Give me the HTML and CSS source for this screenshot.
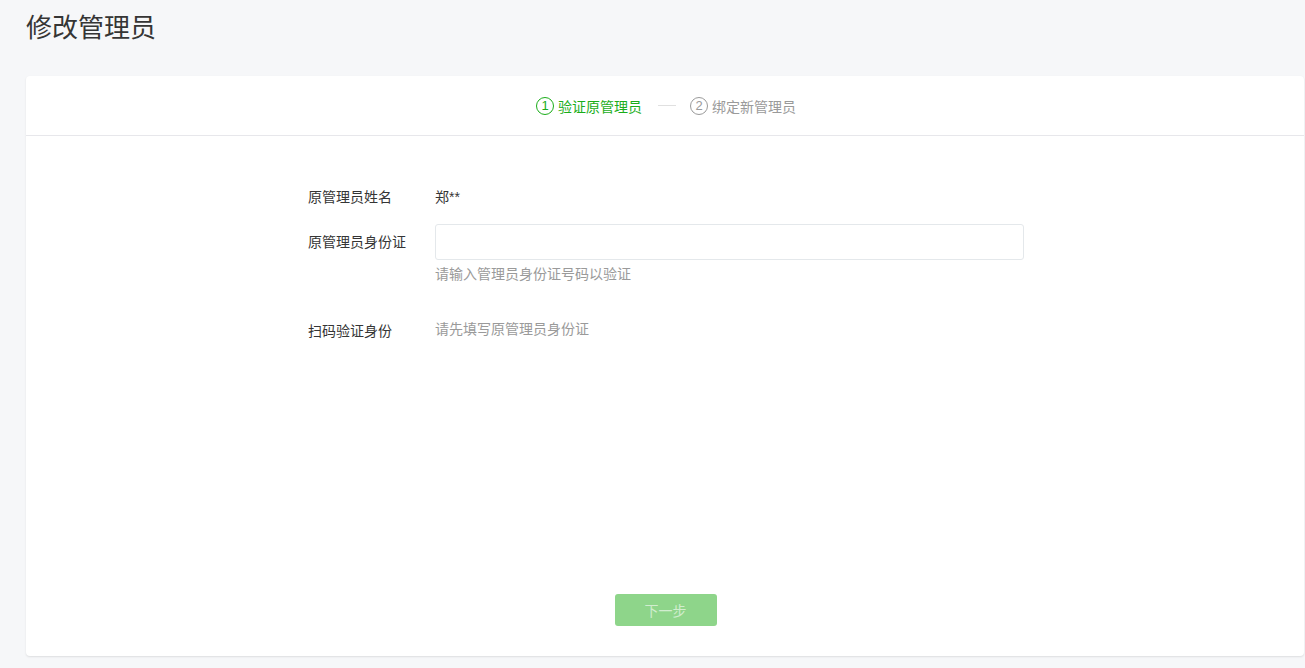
FILE: index.html
```html
<!DOCTYPE html>
<html lang="zh-CN">
<head>
    <meta charset="UTF-8">
    <meta name="viewport" content="width=device-width, initial-scale=1.0">
    <title>修改管理员</title>
    <link rel="stylesheet" href="styles.css">
</head>
<body>
    <div class="page">
        <h1 class="page-title">修改管理员</h1>

        <div class="card">
            <div class="steps">
                <div class="step active">
                    <span class="step-num">1</span>
                    <span class="step-name">验证原管理员</span>
                </div>
                <div class="step-line"></div>
                <div class="step">
                    <span class="step-num">2</span>
                    <span class="step-name">绑定新管理员</span>
                </div>
            </div>

            <div class="form">
                <div class="form-row">
                    <label class="form-label">原管理员姓名</label>
                    <div class="form-value">郑**</div>
                </div>
                <div class="form-row">
                    <label class="form-label">原管理员身份证</label>
                    <div class="form-value">
                        <input type="text" class="form-input">
                        <p class="form-tips">请输入管理员身份证号码以验证</p>
                    </div>
                </div>
                <div class="form-row scan-row">
                    <label class="form-label">扫码验证身份</label>
                    <div class="form-value muted">请先填写原管理员身份证</div>
                </div>
            </div>

            <div class="card-footer">
                <button class="btn-primary" disabled>下一步</button>
            </div>
        </div>
    </div>
</body>
</html>
```

FILE: styles.css
```css
body {
    margin: 0;
    padding: 0;
    background-color: #f6f7f9;
    font-family: "Liberation Sans", "Noto Sans CJK SC", sans-serif;
    color: #353535;
}

.page {
    padding: 8px 1px 12px 26px;
}

.page-title {
    margin: 0 0 28px;
    font-size: 26px;
    font-weight: normal;
    line-height: 40px;
    color: #353535;
}

.card {
    background-color: white;
    border-radius: 4px;
    box-shadow: 0 1px 2px rgba(0, 0, 0, 0.1);
    height: 580px;
    display: flex;
    flex-direction: column;
}

/* 步骤条 */
.steps {
    height: 59px;
    border-bottom: 1px solid #e7e7eb;
    display: flex;
    justify-content: center;
    align-items: center;
    padding-left: 2px;
}

.step {
    display: flex;
    align-items: center;
    font-size: 14px;
    color: #9a9a9a;
}

.step-num {
    width: 16px;
    height: 16px;
    border: 1px solid #9a9a9a;
    border-radius: 50%;
    font-size: 13px;
    line-height: 16px;
    text-align: center;
    margin-right: 4px;
}

.step.active {
    color: #1aad19;
}

.step.active .step-num {
    border-color: #1aad19;
}

.step-line {
    width: 18px;
    height: 1px;
    background-color: #e0e0e0;
    margin: 0 14px 0 16px;
}

/* 表单 */
.form {
    flex: 1;
    width: 716px;
    margin: 0 auto;
    padding: 43px 0 0 2px;
    font-size: 14px;
}

.form-row {
    display: flex;
    margin-bottom: 9px;
}

.form-label {
    width: 127px;
    line-height: 36px;
    color: #353535;
}

.form-value {
    flex: 1;
    line-height: 36px;
}

.form-input {
    display: block;
    box-sizing: border-box;
    width: 589px;
    height: 36px;
    border: 1px solid #e4e8eb;
    border-radius: 3px;
    padding: 0 10px;
    font-size: 14px;
    outline: none;
}

.form-tips {
    margin: 4px 0 0;
    line-height: 20px;
    color: #9a9a9a;
}

.scan-row {
    margin-top: 29px;
}

.muted {
    color: #9a9a9a;
    line-height: 32px;
}

.card-footer {
    text-align: center;
    padding-bottom: 30px;
}

.btn-primary {
    width: 102px;
    height: 32px;
    border: none;
    border-radius: 3px;
    background-color: #8ed58a;
    color: rgba(255, 255, 255, 0.6);
    font-family: inherit;
    font-size: 14px;
    margin-left: 1px;
}
```
